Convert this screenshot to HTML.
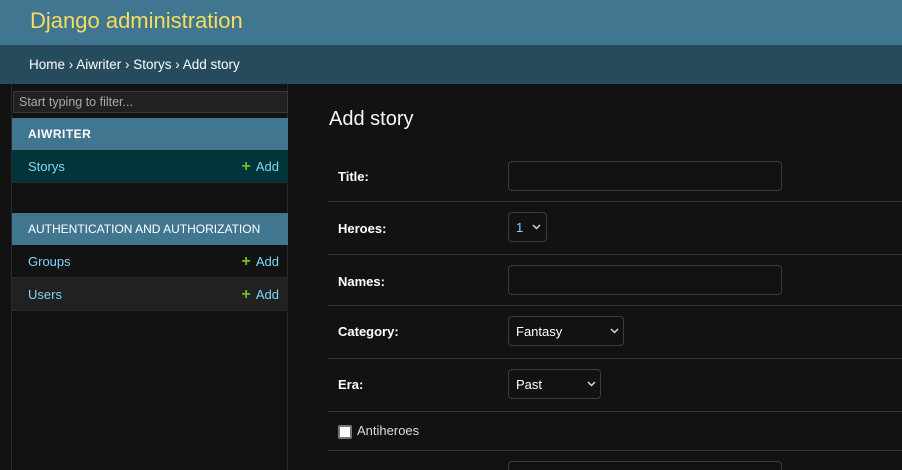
<!DOCTYPE html>
<html style="width:902px;height:470px;overflow:hidden"><head><style>
*{box-sizing:border-box;margin:0;padding:0}
body{width:902px;height:470px;overflow:hidden;background:#121212;font-family:"Liberation Sans",sans-serif;font-size:13px;color:#eee;position:relative}
.hdr{position:absolute;left:0;top:0;width:902px;height:45px;background:#417690;color:#f5dd5d;font-size:22px;padding:8px 0 0 30px}
.bc{position:absolute;left:0;top:45px;width:902px;height:39px;background:#264b5d;color:#fff;font-size:13.5px;padding:12px 0 0 29px}
.side{position:absolute;left:11px;top:84px;width:277px;height:386px;border-left:1px solid #2a2a2a;border-right:1px solid #2a2a2a}
.filter{position:absolute;left:1px;top:7px;width:275px;height:22px;background:#212121;border:1px solid #3a3a3a;color:#aaa;font-size:12.5px;padding:3px 5px}
.cap{position:absolute;left:0;width:276px;height:32px;background:#417690;color:#fff;font-size:12px;padding:9px 16px}
.row{position:absolute;left:0;width:276px;height:33px;border-bottom:1px solid #2a2a2a;color:#81d4fa;font-size:13px;padding:9px 16px}
.row span{position:absolute;right:9px;top:9px}
.row b{color:#70bf2b;font-size:16px;line-height:12px;margin-right:5px}
h1{position:absolute;left:329px;top:108px;font-size:20px;font-weight:normal;color:#f7f7f7}
.f{position:absolute;left:328px;width:574px;border-bottom:1px solid #333}
.f label{position:absolute;left:10px;font-weight:bold;font-size:13px;color:#fff}
.in{position:absolute;left:180px;border:1px solid #3c3c3c;border-radius:4px;background:#121212;height:30px;color:#fff;font-size:13px;padding:7px 7px}
.ch{position:absolute;top:11px}
</style></head><body>
<div class="hdr">Django administration</div>
<div class="bc">Home › Aiwriter › Storys › Add story</div>
<div class="side">
<div class="filter">Start typing to filter...</div>
<div class="cap" style="top:34px;font-weight:bold;letter-spacing:.5px">AIWRITER</div>
<div class="row" style="top:66px;background:#01353a">Storys<span><b>+</b>Add</span></div>
<div class="cap" style="top:129px">AUTHENTICATION AND AUTHORIZATION</div>
<div class="row" style="top:161px">Groups<span><b>+</b>Add</span></div>
<div class="row" style="top:194px;background:#212121">Users<span><b>+</b>Add</span></div>
</div>
<h1>Add story</h1>
<div class="f" style="top:150px;height:52px"><label style="top:19px">Title:</label><div class="in" style="top:11px;width:274px"></div></div>
<div class="f" style="top:202px;height:53px"><label style="top:19px">Heroes:</label><div class="in" style="top:10px;width:39px;color:#81d4fa">1<svg class="ch" style="left:23px" width="9" height="6" viewBox="0 0 9 6"><path d="M1 1l3.5 3.5L8 1" stroke="#ddd" stroke-width="1.4" fill="none"/></svg></div></div>
<div class="f" style="top:255px;height:51px"><label style="top:19px">Names:</label><div class="in" style="top:10px;width:274px"></div></div>
<div class="f" style="top:306px;height:53px"><label style="top:18px">Category:</label><div class="in" style="top:10px;width:116px">Fantasy<svg class="ch" style="left:101px" width="9" height="6" viewBox="0 0 9 6"><path d="M1 1l3.5 3.5L8 1" stroke="#ddd" stroke-width="1.4" fill="none"/></svg></div></div>
<div class="f" style="top:359px;height:53px"><label style="top:18px">Era:</label><div class="in" style="top:10px;width:93px">Past<svg class="ch" style="left:78px" width="9" height="6" viewBox="0 0 9 6"><path d="M1 1l3.5 3.5L8 1" stroke="#ddd" stroke-width="1.4" fill="none"/></svg></div></div>
<div class="f" style="top:412px;height:39px"><div style="position:absolute;left:10px;top:13px;width:14px;height:14px;background:#fff;border:2px solid #777;border-radius:2px"></div><span style="position:absolute;left:29px;top:11px;color:#ddd">Antiheroes</span></div>
<div class="in" style="left:508px;top:461px;width:274px;height:9px;border-bottom:none;border-radius:4px 4px 0 0"></div>
</body></html>
